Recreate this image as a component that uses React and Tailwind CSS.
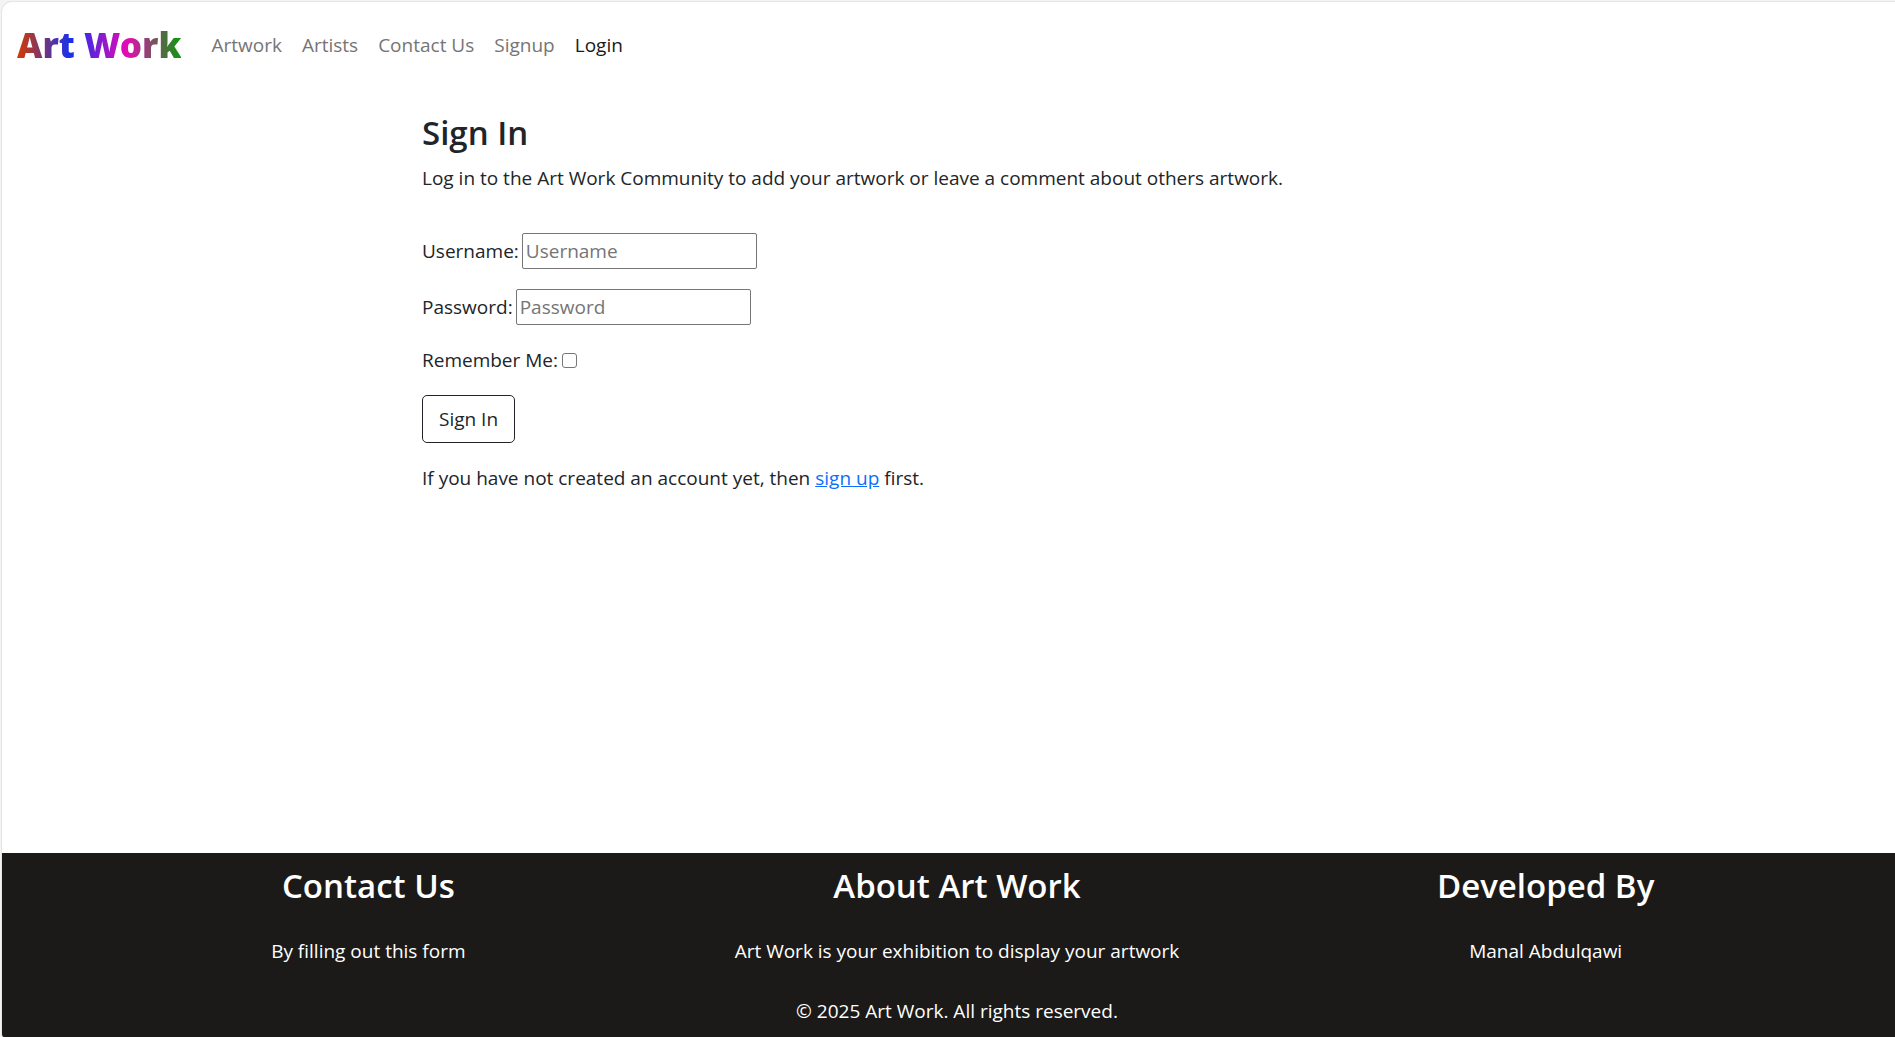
const links = [
  { label: "Artwork" },
  { label: "Artists" },
  { label: "Contact Us" },
  { label: "Signup" },
  { label: "Login", active: true },
];

const columns = [
  { title: "Contact Us", text: "By filling out this form" },
  { title: "About Art Work", text: "Art Work is your exhibition to display your artwork" },
  { title: "Developed By", text: "Manal Abdulqawi" },
];

function Navbar() {
  return (
    <nav className="flex h-[86px] items-center pl-[15px]">
      <a
        href="#"
        className="mr-[30px] bg-[linear-gradient(to_right,#d43a00,#1530f0_33%,#e60ab4_67%,#0a9a0a)] bg-clip-text font-['Noto_Sans',sans-serif] text-[35px] leading-[50px] font-black text-transparent"
      >
        Art Work
      </a>
      <ul className="flex gap-5">
        {links.map(({ label, active }) => (
          <li key={label}>
            <a href="#" className={active ? "text-[#1a1a1a]" : "text-[#757575]"}>
              {label}
            </a>
          </li>
        ))}
      </ul>
    </nav>
  );
}

function Field({ id, label, type }) {
  return (
    <div className="mb-5 flex items-center gap-[3px]">
      <label htmlFor={id}>{label}:</label>
      <input
        id={id}
        type={type}
        placeholder={label}
        className="h-9 w-[235px] rounded-[2px] border border-[#767676] bg-white px-[3px] placeholder:text-[#757575]"
      />
    </div>
  );
}

function SignIn() {
  return (
    <main className="flex-1 pt-6 pl-[17px]">
      <div className="mx-auto max-w-[1070px]">
        <h1 className="mb-[9px] text-[33px] leading-[42px] font-semibold">Sign In</h1>
        <p className="mb-10">
          Log in to the Art Work Community to add your artwork or leave a comment about others artwork.
        </p>
        <form>
          <Field id="username" label="Username" type="text" />
          <Field id="password" label="Password" type="password" />
          <div className="mb-5 flex items-center gap-1">
            <label htmlFor="remember">Remember Me:</label>
            <input
              id="remember"
              type="checkbox"
              className="size-[15px] appearance-none rounded-[3px] border border-[#767676] bg-white checked:bg-[#0d6efd]"
            />
          </div>
          <button type="button" className="mb-5 h-12 rounded-[5px] border border-[#212529] px-4">
            Sign In
          </button>
        </form>
        <p>
          If you have not created an account yet, then{" "}
          <a href="#" className="text-[#0d6efd] underline">
            sign up
          </a>{" "}
          first.
        </p>
      </div>
    </main>
  );
}

function Footer() {
  return (
    <footer className="bg-[#1b1a18] pt-3 pr-[55px] pb-[11px] pl-[72px] text-center text-white">
      <div className="mb-[30px] grid grid-cols-3">
        {columns.map(({ title, text }) => (
          <section key={title}>
            <h2 className="mb-[29px] text-[33px] leading-[42px] font-semibold">{title}</h2>
            <p>{text}</p>
          </section>
        ))}
      </div>
      <p>© 2025 Art Work. All rights reserved.</p>
    </footer>
  );
}

export default function App() {
  return (
    <div className="flex min-h-screen bg-[#f3f3f3] pt-px pl-px font-['Open_Sans','Noto_Sans',sans-serif] text-[19px] leading-[30px] text-[#212529]">
      <div className="flex flex-1 flex-col overflow-hidden rounded-tl-[11px] rounded-bl-[3px] border-t border-l border-[#e6e6e6] bg-white">
        <Navbar />
        <SignIn />
        <Footer />
      </div>
    </div>
  );
}
